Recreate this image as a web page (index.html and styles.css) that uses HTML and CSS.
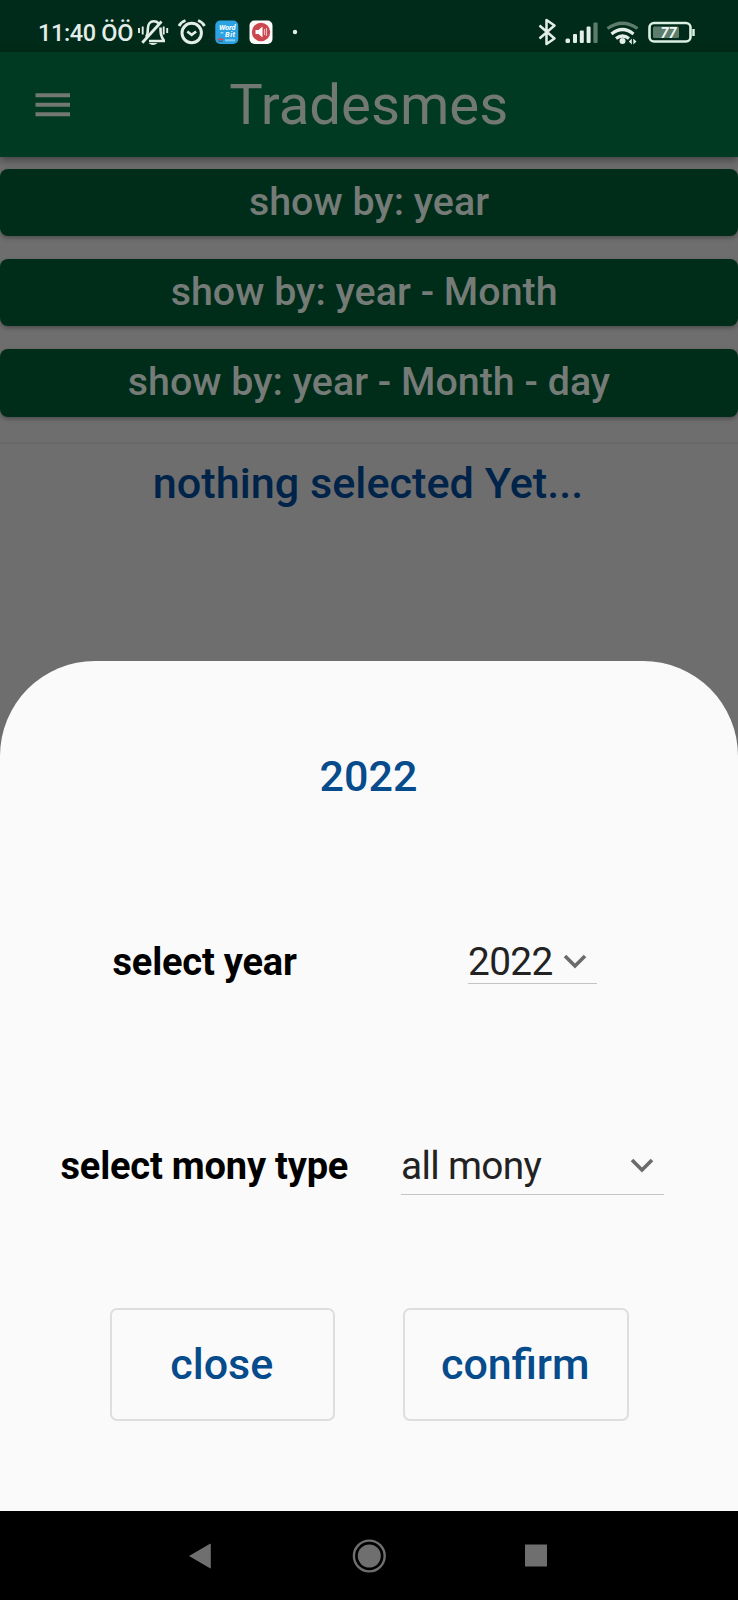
FILE: index.html
```html
<!DOCTYPE html>
<html lang="en">
<head>
<meta charset="utf-8">
<title>Tradesmes</title>
<link rel="stylesheet" href="styles.css">
</head>
<body>
<div class="phone">
  <header class="status">
    <span class="clock">11:40 ÖÖ</span>
    <svg class="status-icons" width="164" height="52" viewBox="136 0 164 52">
      <g fill="none" stroke="#e4eee8" stroke-width="2.6">
        <path d="M139 28v5M142.700 26.500v8M163.700 26.500v8M167.200 28v5" stroke-width="1.900"/>
        <path d="M146 37c1.800-2 1.800-4 1.800-8 0-5 2.500-7.700 6-7.700 2.200 0 3.700.8 4.700 2M160.500 27.500c0 6 .3 8.500 3.500 13.300M165 41H149"/>
        <path d="M142.300 42.800L161.500 21.500" stroke-width="2.800"/>
        <circle cx="191.700" cy="33" r="9.700" stroke-width="3"/>
        <path d="M187.300 31.500l4.400 3.300 4.400-3.300" stroke-width="2.600"/>
        <path d="M179 26q2-4 6.500-5.500M198 20.500q4.500 1.500 6.500 5.500" stroke-width="2.800"/>
      </g>
      <path d="M148.500 43h9q-4.500 4-9 0z" fill="#e4eee8"/>
      <rect x="215.300" y="20.500" width="23" height="23.500" rx="5" fill="#2ba3e3"/>
      <g class="tiny" fill="#fff"><text x="219" y="29.500" textLength="16.500">Word</text><text x="225" y="36.500" textLength="10">Bit</text></g>
      <path d="M220.500 32.800h3" stroke="#9bd6f5" stroke-width="1.500"/>
      <path d="M217.500 39.200h6" stroke="#d34c55" stroke-width="1.500"/><path d="M218 41.200h5" stroke="#54606a" stroke-width="1.300"/>
      <path d="M225 40.300h10" stroke="#84cdf2" stroke-width="2"/>
      <rect x="249.500" y="20.500" width="23" height="23.500" rx="5" fill="#fdfafa"/>
      <circle cx="261" cy="32" r="9.200" fill="#c9474d"/>
      <path d="M255.500 30h3l4-3.500v11l-4-3.500h-3z" fill="#fff"/>
      <path d="M264.500 29v6M266.500 28v8" stroke="#eab8ba" stroke-width="1.200"/>
      <circle cx="295" cy="32" r="2.200" fill="#e4eee8"/>
    </svg>
    <svg class="status-icons right" width="170" height="52" viewBox="530 0 170 52">
      <path d="M539.500 25.500l15 13-8 5.500v-24l8 5.500-15 13" fill="none" stroke="#e4eee8" stroke-width="2.500" stroke-linejoin="round"/>
      <g fill="#e4eee8"><rect x="565.500" y="38.500" width="4.500" height="4.500" rx="1.500"/><rect x="573" y="34" width="4" height="9" rx="1"/><rect x="579.800" y="30.500" width="4" height="12.500" rx="1"/><rect x="586.600" y="26.500" width="4" height="16.500" rx="1"/></g>
      <rect x="593.400" y="22.500" width="4.200" height="20.500" rx="1" fill="#5d7c6c"/>
      <g fill="none" stroke-width="3.200"><path d="M607.500 28.500q15-10.500 30 0" stroke="#5d7c6c"/><path d="M611.500 34q11-9 22 0M616 38.500q6.500-5 13 0" stroke="#e4eee8"/></g>
      <circle cx="622.500" cy="41" r="3" fill="#e4eee8"/>
      <path d="M631.800 38.500v6l-3-3zM633.300 44.500v-6l3.200 3z" fill="#e4eee8"/>
      <rect x="649.500" y="23" width="41" height="18.500" rx="4.500" fill="none" stroke="#d9f0e2" stroke-width="2.600"/>
      <rect x="653" y="26.500" width="26" height="11.500" rx="1.500" fill="#5d7c6c"/>
      <text class="percent" x="660.500" y="37.700">77</text>
      <path d="M693.500 29v7" stroke="#d9f0e2" stroke-width="2.500"/>
    </svg>
  </header>
  <div class="appbar">
    <svg class="menu" width="35" height="24" viewBox="0 0 35 24"><path d="M.5 2.200H35M.5 11.800H35M.5 21.200H35" stroke="#727873" stroke-width="4"/></svg>
    <h1 class="title">Tradesmes</h1>
  </div>
  <main class="content">
    <button class="filter">show by: year</button>
    <button class="filter">show by: year - Month </button>
    <button class="filter">show by: year - Month - day</button>
    <hr class="divider">
    <p class="empty">nothing selected Yet...</p>
  </main>
  <section class="sheet">
    <h2 class="heading">2022</h2>
    <div class="row year">
      <span class="label">select year</span>
      <div class="select"><span>2022</span><svg class="chevron" width="24" height="15" viewBox="0 0 24 15"><path d="M2 2l10 10L22 2" fill="none" stroke="#6b6b6b" stroke-width="3.600"/></svg></div>
    </div>
    <div class="row type">
      <span class="label">select mony type</span>
      <div class="select"><span>all mony</span><svg class="chevron" width="24" height="15" viewBox="0 0 24 15"><path d="M2 2l10 10L22 2" fill="none" stroke="#6b6b6b" stroke-width="3.600"/></svg></div>
    </div>
    <div class="actions">
      <button class="action">close</button>
      <button class="action">confirm</button>
    </div>
  </section>
  <nav class="nav">
    <svg width="738" height="89" viewBox="0 1511 738 89" fill="#6f6f6f"><path d="M189 1556l21-12.200q.8-.4.8.5v23.500q0 .9-.8.400z"/><circle cx="369.300" cy="1556" r="11.500"/><circle cx="369.300" cy="1556" r="15.400" fill="none" stroke="#6f6f6f" stroke-width="2.400"/><rect x="525" y="1544.500" width="22" height="22"/></svg>
  </nav>
</div>
</body>
</html>
```
FILE: styles.css
```css
* { box-sizing: border-box; }
body { margin: 0; font-family: Roboto, sans-serif; }
h1, h2, p { margin: 0; font-weight: 400; white-space: nowrap; }
button { font-family: inherit; margin: 0; padding: 0; white-space: nowrap; }
.phone { width: 738px; height: 1600px; display: flex; flex-direction: column; background: #6e6e6e; overflow: hidden; }
.status { height: 52px; flex: none; background: #002a19; display: flex; align-items: center; padding-left: 38px; }
.clock { width: 98px; flex: none; font-size: 23.5px; letter-spacing: -0.35px; font-weight: 500; color: #e4eee8; white-space: nowrap; line-height: 30px; padding-top: 13px; }
.status-icons { display: block; flex: none; }
.right { margin-left: 230px; }
.tiny { font: italic 700 7.5px Roboto, sans-serif; }
.percent { font: italic 700 14.5px Roboto, sans-serif; fill: #eff8f2; }
.appbar { height: 105px; flex: none; background: #003a22; display: grid; grid-template-columns: 35px 1fr 35px; align-items: center; padding: 0 35.5px 0 35px; box-shadow: 0 3px 8px rgba(0,0,0,.4); }
.title { font-size: 56.3px; line-height: 66px; color: #727873; text-align: center; padding-top: 1px; }
.content { height: 504px; flex: none; padding-top: 11.6px; display: flex; flex-direction: column; }
.filter { height: 67.6px; flex: none; margin-bottom: 22.7px; padding-bottom: 2px; border: 0; border-radius: 8px; background: #002c1a; color: #757b77; font-size: 39.4px; font-weight: 500; white-space: pre; box-shadow: 0 2px 4px rgba(0,0,0,.3); }
.divider { width: 100%; height: 2px; border: 0; margin: 3px 0 0; background: #686868; }
.empty { font-size: 43.2px; line-height: 50px; font-weight: 500; color: #00234a; text-align: center; margin-top: 15px; padding-right: 2px; }
.sheet { height: 850px; flex: none; background: #fafafa; border-radius: 95px 95px 0 0; display: flex; flex-direction: column; }
.heading { font-size: 43px; line-height: 50px; font-weight: 500; color: #064b8b; text-align: center; margin-top: 90px; padding-right: 1px; }
.row { display: flex; align-items: flex-start; }
.label { font-size: 38px; letter-spacing: -0.2px; line-height: 46px; font-weight: 700; color: #000; white-space: nowrap; }
.select { display: flex; justify-content: space-between; border-bottom: 1px solid #c4c4c4; font-size: 38.8px; letter-spacing: -0.65px; line-height: 46px; color: #222; white-space: nowrap; }
.chevron { margin-top: 15px; }
.year { margin-top: 138px; padding-left: 112.5px; }
.year .label { width: 355.5px; }
.year .select { width: 129px; height: 45px; padding-right: 10.5px; }
.type { margin-top: 158px; padding-left: 60.5px; }
.type .label { width: 340.5px; }
.type .select { width: 263px; height: 52px; padding-right: 10px; }
.actions { display: flex; gap: 68px; padding-left: 109.5px; margin-top: 113px; }
.action { width: 225.5px; height: 112.5px; padding: 0 1px 1px 0; border: 2px solid #dedede; border-radius: 7px; background: #fafafa; color: #064b8b; font-size: 43px; font-weight: 500; }
.nav { height: 89px; flex: none; background: #000; }
.nav svg { display: block; }
```
